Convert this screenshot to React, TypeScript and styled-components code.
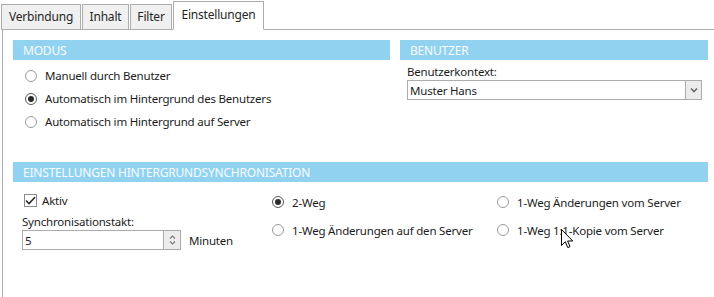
import React from "react";
import styled, { createGlobalStyle, css } from "styled-components";

const Global = createGlobalStyle`
  html, body { margin: 0; padding: 0; background: #ffffff; }
  body {
    font-family: "Noto Sans", "Open Sans", "DejaVu Sans", sans-serif;
    font-size: 11.5px;
    letter-spacing: -0.2px;
    color: #1c1c1c;
    width: 714px;
    height: 297px;
    overflow: hidden;
  }
  * { box-sizing: border-box; }
`;

const Root = styled.div`
  width: 714px;
  height: 297px;
  display: flex;
  flex-direction: column;
  padding-left: 1px;
`;

const TabStrip = styled.div`
  display: flex;
  align-items: flex-end;
  gap: 1px;
  height: 30px;
  padding-top: 1px;
  position: relative;
  z-index: 1;
  margin-bottom: -1px;
`;

const Tab = styled.div<{ $active?: boolean; $w: number }>`
  width: ${(p) => p.$w}px;
  display: flex;
  align-items: center;
  justify-content: center;
  border: 1px solid #acacac;
  background: #f0f0f0;
  color: #262626;
  height: 26px;
  padding-bottom: 1px;
  white-space: nowrap;
  font-size: 12px;
  ${(p) =>
    p.$active &&
    css`
      background: #ffffff;
      height: 29px;
      border-bottom-color: #ffffff;
      padding-bottom: 3px;
    `}
`;

const Panel = styled.div`
  flex: 1;
  margin-left: 1px;
  border-top: 1px solid #acacac;
  border-left: 1px solid #acacac;
  padding: 10px 6px 0 10px;
  display: flex;
  flex-direction: column;
`;

const TopRow = styled.div`
  display: grid;
  grid-template-columns: 377px 1fr;
  column-gap: 10px;
  height: 122px;
`;

const Section = styled.div`
  display: flex;
  flex-direction: column;
`;

const SectionHeader = styled.div`
  height: 20px;
  background: #92d2f1;
  color: #f7fcff;
  display: flex;
  align-items: center;
  padding-left: 10px;
  text-transform: uppercase;
  font-size: 12px;
`;

const RadioList = styled.div`
  display: flex;
  flex-direction: column;
  padding: 4px 0 0 12px;
`;

const RadioRow = styled.label<{ $h?: number }>`
  display: flex;
  align-items: center;
  gap: 8px;
  height: ${(p) => p.$h ?? 23}px;
  white-space: nowrap;
`;

const RadioCircle = styled.span<{ $checked?: boolean }>`
  width: 12px;
  height: 12px;
  border-radius: 50%;
  border: 1px solid ${(p) => (p.$checked ? "#5a5a5a" : "#9a9a9a")};
  background: #ffffff;
  display: flex;
  align-items: center;
  justify-content: center;
  flex: none;
  &::after {
    content: "";
    width: 6px;
    height: 6px;
    border-radius: 50%;
    background: ${(p) => (p.$checked ? "#2b2b2b" : "transparent")};
  }
`;

const UserBody = styled.div`
  display: flex;
  flex-direction: column;
  padding: 3px 6px 0 7px;
`;

const FieldLabel = styled.div`
  height: 17px;
  display: flex;
  align-items: center;
`;

const Select = styled.div`
  height: 20px;
  border: 1px solid #acacac;
  display: flex;
  align-items: stretch;
  background: #ffffff;
`;

const SelectValue = styled.div`
  flex: 1;
  display: flex;
  align-items: center;
  padding-left: 2px;
`;

const SelectButton = styled.div`
  width: 16px;
  border-left: 1px solid #acacac;
  background: #ececec;
  display: flex;
  align-items: center;
  justify-content: center;
`;

const SyncBody = styled.div`
  display: flex;
  padding: 8px 0 0 9px;
`;

const SyncLeft = styled.div`
  width: 250px;
  display: flex;
  flex-direction: column;
`;

const CheckRow = styled.label`
  height: 20px;
  display: flex;
  align-items: center;
  gap: 5px;
  padding-left: 2px;
`;

const CheckBox = styled.span`
  width: 13px;
  height: 13px;
  border: 1px solid #8a8a8a;
  background: #ffffff;
  display: flex;
  align-items: center;
  justify-content: center;
`;

const TaktLabel = styled(FieldLabel)`
  margin-top: 3px;
  height: 16px;
`;

const SpinRow = styled.div`
  display: flex;
  align-items: center;
  gap: 8px;
  margin-top: 1px;
`;

const SpinBox = styled.div`
  width: 159px;
  height: 20px;
  border: 1px solid #acacac;
  display: flex;
  align-items: stretch;
`;

const SpinValue = styled.div`
  flex: 1;
  display: flex;
  align-items: center;
  padding-left: 2px;
`;

const SpinButtons = styled.div`
  width: 17px;
  border-left: 1px solid #acacac;
  background: #ececec;
  display: flex;
  flex-direction: column;
  align-items: center;
  justify-content: center;
  gap: 2px;
`;

const SyncRadios = styled.div`
  display: grid;
  grid-template-columns: 225px auto;
  grid-auto-rows: 28px;
  margin-top: -2px;
`;

const Cursor = styled.svg`
  position: absolute;
  left: 561px;
  top: 229px;
  pointer-events: none;
`;

const modes = [
  { label: "Manuell durch Benutzer", checked: false },
  { label: "Automatisch im Hintergrund des Benutzers", checked: true },
  { label: "Automatisch im Hintergrund auf Server", checked: false },
];

const syncModes = [
  { label: "2-Weg", checked: true },
  { label: "1-Weg Änderungen vom Server", checked: false },
  { label: "1-Weg Änderungen auf den Server", checked: false },
  { label: "1-Weg 1:1-Kopie vom Server", checked: false },
];

const tabs = [
  { label: "Verbindung", w: 80 },
  { label: "Inhalt", w: 47 },
  { label: "Filter", w: 42 },
  { label: "Einstellungen", w: 91, active: true },
];

export default function App() {
  return (
    <>
      <Global />
      <Root>
        <TabStrip>
          {tabs.map((t) => (
            <Tab key={t.label} $active={t.active} $w={t.w}>
              {t.label}
            </Tab>
          ))}
        </TabStrip>
        <Panel>
          <TopRow>
            <Section>
              <SectionHeader>Modus</SectionHeader>
              <RadioList>
                {modes.map((m) => (
                  <RadioRow key={m.label}>
                    <RadioCircle $checked={m.checked} />
                    {m.label}
                  </RadioRow>
                ))}
              </RadioList>
            </Section>
            <Section>
              <SectionHeader>Benutzer</SectionHeader>
              <UserBody>
                <FieldLabel>Benutzerkontext:</FieldLabel>
                <Select>
                  <SelectValue>Muster Hans</SelectValue>
                  <SelectButton>
                    <svg width="8" height="6" viewBox="0 0 8 6">
                      <path d="M1 1.5 L4 4.5 L7 1.5" fill="none" stroke="#6a6a6a" strokeWidth="1.6" />
                    </svg>
                  </SelectButton>
                </Select>
              </UserBody>
            </Section>
          </TopRow>
          <Section>
            <SectionHeader>Einstellungen Hintergrundsynchronisation</SectionHeader>
            <SyncBody>
              <SyncLeft>
                <CheckRow>
                  <CheckBox>
                    <svg width="11" height="9" viewBox="0 0 11 9">
                      <path d="M1 4.5 L4 7.5 L10 1.2" fill="none" stroke="#2b2b2b" strokeWidth="1.6" />
                    </svg>
                  </CheckBox>
                  Aktiv
                </CheckRow>
                <TaktLabel>Synchronisationstakt:</TaktLabel>
                <SpinRow>
                  <SpinBox>
                    <SpinValue>5</SpinValue>
                    <SpinButtons>
                      <svg width="7" height="4" viewBox="0 0 7 4">
                        <path d="M1 3.5 L3.5 1 L6 3.5" fill="none" stroke="#7a7a7a" strokeWidth="1.2" />
                      </svg>
                      <svg width="7" height="4" viewBox="0 0 7 4">
                        <path d="M1 0.5 L3.5 3 L6 0.5" fill="none" stroke="#7a7a7a" strokeWidth="1.2" />
                      </svg>
                    </SpinButtons>
                  </SpinBox>
                  Minuten
                </SpinRow>
              </SyncLeft>
              <SyncRadios>
                {syncModes.map((m) => (
                  <RadioRow key={m.label} $h={28}>
                    <RadioCircle $checked={m.checked} />
                    {m.label}
                  </RadioRow>
                ))}
              </SyncRadios>
            </SyncBody>
          </Section>
        </Panel>
        <Cursor width="13" height="21" viewBox="0 0 13 21">
          <path
            d="M0.5 0.5 L0.5 16.5 L4.3 12.8 L6.8 18.6 L9 17.6 L6.6 12 L11.8 12 Z"
            fill="#ffffff"
            stroke="#000000"
            strokeWidth="1"
            strokeLinejoin="miter"
          />
        </Cursor>
      </Root>
    </>
  );
}
